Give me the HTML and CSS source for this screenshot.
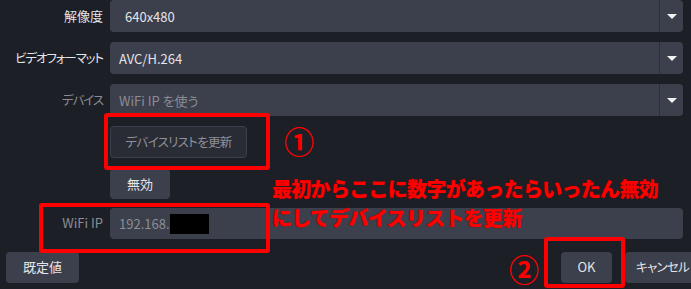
FILE: index.html
```html
<!DOCTYPE html>
<html lang="ja">
<head>
<meta charset="utf-8">
<link rel="stylesheet" href="styles.css">
</head>
<body>
<div class="page">
  <div class="form">
    <div class="row">
      <div class="label">解像度</div>
      <div class="combo"><span class="value pad-wide">640x480</span><span class="arrow"></span></div>
    </div>
    <div class="row">
      <div class="label kana">ビデオフォーマット</div>
      <div class="combo"><span class="value">AVC/H.264</span><span class="arrow"></span></div>
    </div>
    <div class="row">
      <div class="label kana dim">デバイス</div>
      <div class="combo"><span class="value dim">WiFi IP を使う</span><span class="arrow"></span></div>
    </div>
    <div class="row sub">
      <div class="label"></div>
      <div><button class="btn btn-outline kana">デバイスリストを更新</button></div>
    </div>
    <div class="row sub2">
      <div class="label"></div>
      <div><button class="btn btn-small">無効</button></div>
    </div>
    <div class="row ip">
      <div class="label dim">WiFi IP</div>
      <div class="field"><span class="value dim">192.168.</span><span class="redact"></span></div>
    </div>
  </div>
  <div class="footer">
    <button class="btn btn-foot">既定値</button>
    <div class="foot-right">
      <button class="btn btn-ok">OK</button>
      <button class="btn btn-cancel kana">キャンセル</button>
    </div>
  </div>

  <div class="mark box1"></div>
  <div class="mark box2"></div>
  <div class="mark box3"></div>
  <div class="num num1">①</div>
  <div class="num num2">②</div>
  <div class="note">最初からここに数字があったらいったん無効<br>にしてデバイスリストを更新</div>
</div>
</body>
</html>
```
FILE: styles.css
```css
* { box-sizing: border-box; }
html, body {
  margin: 0;
  padding: 0;
  background: #1d1f26;
}
body {
  font-family: "Noto Sans CJK JP", "Noto Sans", sans-serif;
  font-size: 13px;
  font-feature-settings: "palt";
  color: #e4e5e8;
  width: 691px;
  height: 289px;
  overflow: hidden;
}
.page {
  position: relative;
  width: 691px;
  height: 289px;
}
.form {
  display: flex;
  flex-direction: column;
  width: 683px;
}
.row {
  display: grid;
  grid-template-columns: 103px 1fr;
  column-gap: 7px;
  align-items: center;
  height: 32px;
  margin-bottom: 10px;
}
.row.sub { margin-bottom: 11px; }
.row.sub2 { height: 30px; margin-bottom: 9px; }
.row.ip { height: 31px; margin-bottom: 13px; }
.label {
  text-align: right;
  color: #e4e5e8;
  white-space: nowrap;
  padding-bottom: 2px;
}
.kana {
  font-size: 12.5px;
  letter-spacing: -1.1px;
}
.dim { color: #8b8d94; }
.combo, .field {
  height: 100%;
  background: #3c3f4c;
  border-radius: 4px;
  display: flex;
  align-items: center;
}
.combo .value, .field .value {
  flex: 1;
  padding-left: 9px;
}
.combo .value.pad-wide { padding-left: 15px; }
.arrow {
  width: 24px;
  height: 100%;
  border-left: 1px solid #2c2f38;
  display: flex;
  align-items: center;
  justify-content: center;
}
.arrow::before {
  content: "";
  border-left: 5px solid transparent;
  border-right: 5px solid transparent;
  border-top: 5px solid #f2f2f2;
}
.field .value { flex: 0 0 auto; }
.redact {
  width: 39px;
  height: 20px;
  background: #000;
}
.btn {
  font-family: inherit;
  font-feature-settings: "palt";
  font-size: 13px;
  border: none;
  border-radius: 4px;
  background: #3c3f4c;
  color: #e4e5e8;
  padding: 0 0 2px;
  display: flex;
  align-items: center;
  justify-content: center;
}
.btn.kana {
  font-size: 12.5px;
  letter-spacing: -0.7px;
}
.btn-outline {
  width: 137px;
  height: 32px;
  background: #292c35;
  border: 1px solid #3c3f4c;
  color: #8f9198;
}
.btn-small {
  width: 60px;
  height: 30px;
}
.footer {
  display: flex;
  justify-content: space-between;
  align-items: center;
  padding-left: 6px;
  height: 31px;
}
.btn-foot {
  width: 73px;
  height: 31px;
}
.foot-right {
  display: flex;
  gap: 13px;
  margin-right: -8px;
}
.btn-ok {
  width: 51px;
  height: 31px;
}
.btn-cancel {
  width: 74px;
  height: 31px;
  justify-content: flex-start;
  padding-left: 11px;
  white-space: nowrap;
}

/* annotations overlay */
.mark {
  position: absolute;
  border: 4px solid #ff0000;
  border-radius: 3px;
}
.box1 { left: 104px; top: 113px; width: 166px; height: 57px; }
.box2 { left: 39px; top: 203px; width: 231px; height: 50px; }
.box3 { left: 544px; top: 237px; width: 81px; height: 51px; }
.num {
  position: absolute;
  color: #ff0000;
  font-weight: bold;
  font-size: 30px;
  line-height: 34px;
  font-feature-settings: normal;
}
.num1 { left: 284px; top: 123px; }
.num2 { left: 509px; top: 251px; }
.note {
  position: absolute;
  left: 272px;
  top: 174px;
  color: #ff0000;
  font-weight: 900;
  font-size: 20px;
  line-height: 29px;
  letter-spacing: -0.7px;
  white-space: nowrap;
  font-feature-settings: normal;
  text-shadow: 0 0 1px #7a0000;
}
```
